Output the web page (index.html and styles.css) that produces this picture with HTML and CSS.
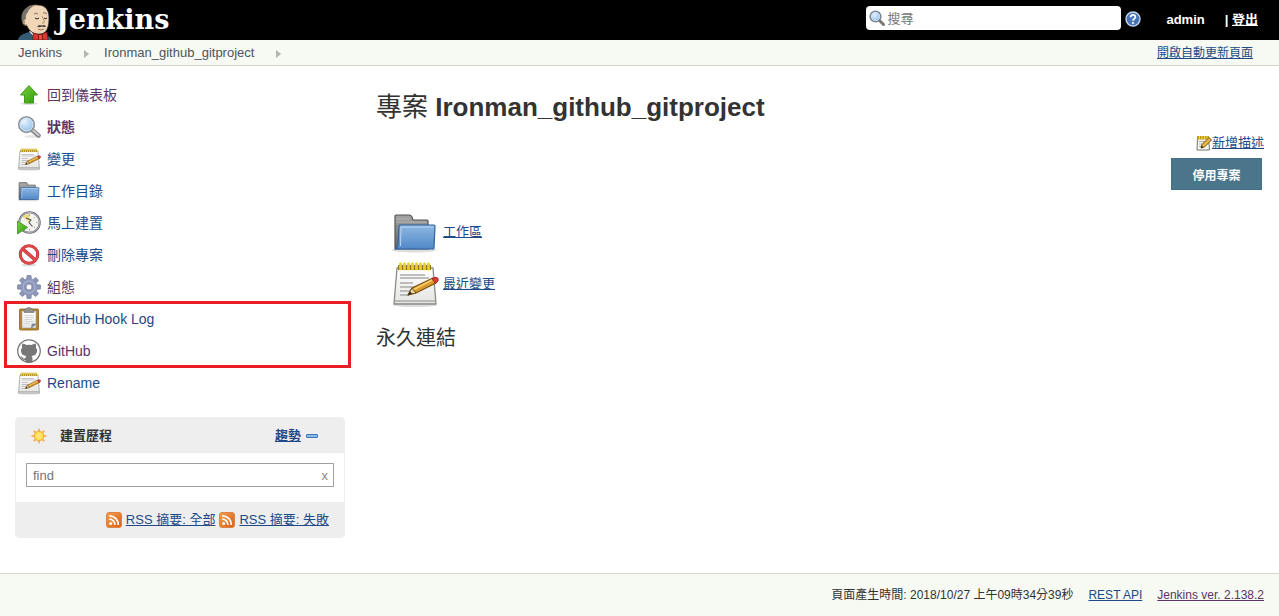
FILE: index.html
```html
<!DOCTYPE html>
<html lang="zh-TW">
<head>
<meta charset="utf-8">
<title>Ironman_github_gitproject [Jenkins]</title>
<link rel="stylesheet" href="styles.css">
</head>
<body>
<svg class="sprite" aria-hidden="true">
  <defs>
    <linearGradient id="g-blue" x1="0" y1="0" x2="0" y2="1"><stop offset="0" stop-color="#8fb8e3"/><stop offset="1" stop-color="#5188c8"/></linearGradient>
    <linearGradient id="g-green" x1="0" y1="0" x2="1" y2="1"><stop offset="0" stop-color="#7ed23c"/><stop offset="1" stop-color="#2f9a0c"/></linearGradient>
    <linearGradient id="g-paper" x1="0" y1="0" x2="0" y2="1"><stop offset="0" stop-color="#ffffff"/><stop offset="1" stop-color="#e4e4e2"/></linearGradient>
    <linearGradient id="g-gray" x1="0" y1="0" x2="0" y2="1"><stop offset="0" stop-color="#a2a2a2"/><stop offset="1" stop-color="#666666"/></linearGradient>
    <linearGradient id="g-orange" x1="0" y1="0" x2="1" y2="1"><stop offset="0" stop-color="#f2a04e"/><stop offset="1" stop-color="#d95f17"/></linearGradient>
    <radialGradient id="g-lens" cx=".4" cy=".35" r=".7"><stop offset="0" stop-color="#e0effd"/><stop offset="1" stop-color="#8dbbe8"/></radialGradient>
    <radialGradient id="g-sun"><stop offset="0" stop-color="#fff38a"/><stop offset="1" stop-color="#fbd23c"/></radialGradient>
  </defs>
  <symbol id="i-up" viewBox="0 0 48 48">
    <ellipse cx="24" cy="41" rx="17" ry="3" fill="#ddd"/>
    <path d="M24 5 41 24H33V40H15V24H7Z" fill="url(#g-green)" stroke="#3c9a17" stroke-width="2" stroke-linejoin="round"/>
  </symbol>
  <symbol id="i-search" viewBox="0 0 48 48">
    <ellipse cx="30" cy="43" rx="15" ry="3" fill="#e6e6e6"/>
    <path d="M30 30 43 41" stroke="#8b8b8b" stroke-width="9" stroke-linecap="round"/>
    <path d="M31 30 43 40" stroke="#c9c9c9" stroke-width="4" stroke-linecap="round"/>
    <circle cx="19" cy="19" r="15.500" fill="url(#g-lens)" stroke="#8c969f" stroke-width="3.500"/>
    <circle cx="19" cy="19" r="13" fill="none" stroke="#e6edf3" stroke-width="1.500"/>
    <path d="M10 19c0-7 5-9 9-9" fill="none" stroke="#fff" stroke-width="2"/>
  </symbol>
  <symbol id="i-search-small" viewBox="0 0 16 16">
    <path d="M10 10 14.500 14.500" stroke="#777" stroke-width="3" stroke-linecap="round"/>
    <circle cx="6.500" cy="6.500" r="5.300" fill="url(#g-lens)" stroke="#76828e" stroke-width="1.600"/>
    <circle cx="6.500" cy="6.500" r="4.200" fill="none" stroke="#dce9f5" stroke-width=".7"/>
  </symbol>
  <symbol id="i-notepad" viewBox="0 0 48 48">
    <ellipse cx="24" cy="45" rx="22" ry="2" fill="#ddd"/>
    <path d="M6 8H42L45 44H3Z" fill="url(#g-paper)" stroke="#8a8a86" stroke-width="1.3" stroke-linejoin="round"/>
    <path d="M4 41H44" stroke="#aaa" stroke-width="1.5"/>
    <path d="M9 15H34M9 18H38M9 23H22M9 27H33M9 31H22M9 35H18" stroke="#aaa" stroke-width="1.3"/>
    <path d="M7 5H40V10H7Z" fill="#8c7a18"/>
    <path d="M9.500 4V9M13.500 4V9M17.500 4V9M21.500 4V9M25.500 4V9M29.500 4V9M33.500 4V9M37.500 4V9" stroke="#e8cd31" stroke-width="2.800" stroke-linecap="round"/>
    <path d="M17 35 21 28 42 18 45 23 25 33Z" fill="#d99a2b" stroke="#7a5312" stroke-width="1.2" stroke-linejoin="round"/>
    <path d="M22 30 41 20" stroke="#f6cf6c" stroke-width="1.500"/>
    <path d="M17 35 21 28 25 33Z" fill="#edd5a4" stroke="#6b4a13"/>
    <path d="M17 35 19 31.500 21 33.500Z" fill="#222"/>
    <path d="M41 18.500 44 17.500Q48 17 47 21L44.500 23.500Z" fill="#dd3b36" stroke="#a82622"/>
  </symbol>
  <symbol id="i-folder" viewBox="0 0 48 48">
    <ellipse cx="23" cy="42" rx="22" ry="2.500" fill="#ddd"/>
    <path d="M4 41V8Q4 7 5 7H18Q20 7 21 9L22 12H36Q37 12 37 13V41Z" fill="url(#g-gray)" stroke="#555" stroke-width="1.200"/>
    <path d="M5 11H19M5 14H36" stroke="#b5b5b5"/>
    <path d="M9 17H43Q44 17 44 18L43 40Q43 41 42 41H5Q6 40 7 36L8 18Q8 17 9 17Z" fill="url(#g-blue)" stroke="#2f639f" stroke-width="1.200"/>
    <path d="M9.500 38 10 19H42.500" fill="none" stroke="#b9d6f2"/>
  </symbol>
  <symbol id="i-clock" viewBox="0 0 48 48">
    <circle cx="25" cy="23" r="20.500" fill="#f4f4ee" stroke="#6d6d78" stroke-width="4"/>
    <circle cx="25" cy="23" r="20" fill="none" stroke="#bcbcc6" stroke-width="2"/>
    <path d="M25 23 11 11Q17 5 25 6Z" fill="#edd97f"/>
    <path d="M25 7v3M25 36v3M38 23h3M36 12l-2 2M36 34l-2-2" stroke="#999" stroke-width="1.800"/>
    <path d="M18 14 28 18 24 23 31 31" fill="none" stroke="#555" stroke-width="2.200"/>
    <path d="M1 20 21 33 1 46Z" fill="url(#g-green)" stroke="#3b8b22" stroke-width="1.500"/>
  </symbol>
  <symbol id="i-stop" viewBox="0 0 48 48">
    <ellipse cx="24" cy="44" rx="15" ry="3" fill="#ddd"/>
    <circle cx="24" cy="23" r="17.500" fill="#fff" stroke="#b9272a" stroke-width="6"/>
    <path d="M11.500 12 36.500 34" stroke="#b9272a" stroke-width="7"/>
    <circle cx="24" cy="23" r="17.500" fill="none" stroke="#df4a4c" stroke-width="4"/>
    <path d="M11.500 12 36.500 34" stroke="#df4a4c" stroke-width="5"/>
  </symbol>
  <symbol id="i-gear" viewBox="0 0 48 48">
    <g fill="#8b96b8" stroke="#69749a" stroke-width="1.200">
      <path id="tooth" d="M19 10 20 1H28L29 10Z"/>
      <use href="#tooth" transform="rotate(45 24 24)"/><use href="#tooth" transform="rotate(90 24 24)"/><use href="#tooth" transform="rotate(135 24 24)"/><use href="#tooth" transform="rotate(180 24 24)"/><use href="#tooth" transform="rotate(225 24 24)"/><use href="#tooth" transform="rotate(270 24 24)"/><use href="#tooth" transform="rotate(315 24 24)"/>
    </g>
    <circle cx="24" cy="24" r="11.500" fill="none" stroke="#8b96b8" stroke-width="11"/>
    <circle cx="24" cy="24" r="12" fill="none" stroke="#a5aecb" stroke-width="3"/>
    <circle cx="24" cy="24" r="6" fill="#fff" stroke="#69749a" stroke-width="1.500"/>
  </symbol>
  <symbol id="i-clipboard" viewBox="0 0 48 48">
    <rect x="5" y="4" width="38" height="42" rx="2" fill="#b8852f" stroke="#8a5d14" stroke-width="1.500"/>
    <path d="M10 8H38V42H10Z" fill="url(#g-paper)" stroke="#999"/>
    <path d="M15 17H33M15 21H33M15 25H30M15 29H33M15 33H26" stroke="#ccc" stroke-width="1.500"/>
    <path d="M29 42 38 34 30 34Z" fill="#8294aa" stroke="#666"/>
    <path d="M14 11V6Q14 4 17 4H19Q19 1 24 1T29 4H31Q34 4 34 6V11Z" fill="#92928c" stroke="#5e5e59"/>
  </symbol>
  <symbol id="i-github" viewBox="0 0 48 48">
    <circle cx="24" cy="24" r="22.500" fill="#fff" stroke="#777" stroke-width="2.500"/>
    <path d="M11 9Q15 9 19 12Q24 11 29 12Q33 9 37 9Q39 13 37.500 17Q41 20 40 25Q39 33 29 34Q31 36 31 39V46Q24 48 17 46V42Q11 43 9 38Q7 36 6 35Q10 34 12 38Q14 40 17 38Q17 35 19 34Q9 33 8 25Q7 20 10.500 17Q9 13 11 9Z" fill="#777"/>
  </symbol>
  <symbol id="i-sun" viewBox="0 0 16 16">
    <path d="M8 .5V15.500M.5 8H15.500M2.700 2.700 13.300 13.300M13.300 2.700 2.700 13.300" stroke="#f2b767" stroke-width="2"/>
    <circle cx="8" cy="8" r="4.800" fill="url(#g-sun)" stroke="#f0ad48"/>
  </symbol>
  <symbol id="i-rss" viewBox="0 0 16 16">
    <rect x=".5" y=".5" width="15" height="15" rx="2.500" fill="url(#g-orange)" stroke="#e08343"/>
    <circle cx="4.700" cy="11.500" r="1.500" fill="#fff"/>
    <path d="M3.300 7.200A5.500 5.500 0 0 1 8.900 12.900M3.300 3.800A9 9 0 0 1 12.300 12.900" fill="none" stroke="#fff" stroke-width="1.800"/>
  </symbol>
  <symbol id="i-help" viewBox="0 0 16 16">
    <circle cx="8" cy="8" r="7" fill="#4775b5" stroke="#c3d3e8" stroke-width="1.400"/>
    <path d="M5.600 6.200Q5.800 3.900 8 3.900T10.400 6C10.400 7.800 8 7.700 8 9.700" fill="none" stroke="#fff" stroke-width="1.700"/>
    <circle cx="8" cy="12" r="1.100" fill="#fff"/>
  </symbol>
  <symbol id="i-edit" viewBox="0 0 16 16">
    <path d="M1.500 2.500H12.500L13.500 15H1Z" fill="#f8f8f4" stroke="#77736a"/>
    <path d="M3 6.500H10M3 9H8M3 11.500H7" stroke="#aaa"/>
    <path d="M1 1H13V4.500H1Z" fill="#c39b1a"/>
    <path d="M3.500 1V4M6 1V4M8.500 1V4M11 1V4" stroke="#f3d94c"/>
    <path d="M5 13 6 9.500 13 2.500 15.500 5 8.500 12Z" fill="#e9b73d" stroke="#77550f"/>
    <path d="M5 13 5.700 10.500 7.500 12.200Z" fill="#222"/>
  </symbol>
</svg>

<header class="header">
  <a class="logo" href="#">
    <svg class="logo-mark" viewBox="0 0 34 36" aria-hidden="true">
      <path d="M0 36Q1 31 8 29L14 27 27 31Q32 32 34 36Z" fill="#335c74"/>
      <path d="M11 27 16 33 25 36 27 30Z" fill="#fff"/>
      <path d="M5 11C6 3 13 0 20 1 28 1 31.500 7 31 15 31 24 28 30 22 30 16 31 11 27 9 22 4 22 3 17 6 15Z" fill="#f0d6b7" stroke="#231f20" stroke-width=".8"/>
      <path d="M4 18Q2 10 7 5 12 1 17 1.500 11 4 10 8 7 11 8 15 7 15 6 17Z" fill="#77736b"/>
      <path d="M7 18Q5 17 6 20 7 22 9 21" fill="none" stroke="#6d4c35" stroke-width=".8"/>
      <path d="M16 10Q18 8 20 10M25 9Q27 8 29 10" fill="none" stroke="#57463a" stroke-width=".7"/>
      <path d="M17 14Q19 16 21 14M26 14Q28 15.500 29 14" fill="none" stroke="#231f20"/>
      <path d="M24 12Q27 17 26 19L24 19" fill="none" stroke="#9d7559" stroke-width=".7"/>
      <path d="M19 22.500Q21 20 24 21.500 27 20 28 22.500 26 23.500 24 22.500 21 24 19 22.500Z" fill="#4b4542"/>
      <path d="M20 25Q23 27 26 25" fill="none" stroke="#8a5a45" stroke-width=".8"/>
      <path d="M15 29 22 31 29 28 30 36H15Z" fill="#d33833" stroke="#6d120f" stroke-width=".7"/>
      <path d="M20.500 30.500H24.500V36H20.500Z" fill="#ef4841" stroke="#6d120f" stroke-width=".8"/>
    </svg>
    <span class="logo-name">Jenkins</span>
  </a>
  <form class="search">
    <svg class="icon-16" aria-hidden="true"><use href="#i-search-small"/></svg>
    <input class="search-input" type="text" placeholder="搜尋" aria-label="搜尋">
  </form>
  <a class="help" href="#" aria-label="說明"><svg class="icon-16" aria-hidden="true"><use href="#i-help"/></svg></a>
  <div class="login"><a class="user" href="#">admin</a><span>| <a class="logout" href="#">登出</a></span></div>
</header>

<nav class="crumbs">
  <a class="crumb" href="#">Jenkins</a><span class="crumb-arrow"></span>
  <a class="crumb" href="#">Ironman_github_gitproject</a><span class="crumb-arrow"></span>
  <a class="refresh" href="#">開啟自動更新頁面</a>
</nav>

<div class="page">
  <aside class="side">
    <nav class="tasks">
      <a class="task visited" href="#"><svg class="icon-24" aria-hidden="true"><use href="#i-up"/></svg>回到儀表板</a>
      <a class="task visited current" href="#"><svg class="icon-24" aria-hidden="true"><use href="#i-search"/></svg>狀態</a>
      <a class="task" href="#"><svg class="icon-24" aria-hidden="true"><use href="#i-notepad"/></svg>變更</a>
      <a class="task" href="#"><svg class="icon-24" aria-hidden="true"><use href="#i-folder"/></svg>工作目錄</a>
      <a class="task" href="#"><svg class="icon-24" aria-hidden="true"><use href="#i-clock"/></svg>馬上建置</a>
      <a class="task" href="#"><svg class="icon-24" aria-hidden="true"><use href="#i-stop"/></svg>刪除專案</a>
      <a class="task visited" href="#"><svg class="icon-24" aria-hidden="true"><use href="#i-gear"/></svg>組態</a>
      <div class="marked">
        <a class="task" href="#"><svg class="icon-24" aria-hidden="true"><use href="#i-clipboard"/></svg>GitHub Hook Log</a>
        <a class="task visited" href="#"><svg class="icon-24" aria-hidden="true"><use href="#i-github"/></svg>GitHub</a>
      </div>
      <a class="task" href="#"><svg class="icon-24" aria-hidden="true"><use href="#i-notepad"/></svg>Rename</a>
    </nav>
    <section class="history">
      <div class="history-head">
        <svg class="icon-16" aria-hidden="true"><use href="#i-sun"/></svg>
        <h2 class="history-title">建置歷程</h2>
        <a class="trend" href="#">趨勢</a>
        <button class="collapse" type="button" aria-label="收合"></button>
      </div>
      <div class="history-body">
        <div class="find">
          <input class="find-input" type="text" placeholder="find" aria-label="find">
          <button class="find-clear" type="button">x</button>
        </div>
      </div>
      <div class="history-foot">
        <svg class="icon-16" aria-hidden="true"><use href="#i-rss"/></svg>
        <a href="#">RSS 摘要: 全部</a>
        <svg class="icon-16" aria-hidden="true"><use href="#i-rss"/></svg>
        <a href="#">RSS 摘要: 失敗</a>
      </div>
    </section>
  </aside>

  <main class="main">
    <h1 class="title"><span class="title-kind">專案</span> Ironman_github_gitproject</h1>
    <div class="actions">
      <a class="describe" href="#"><svg class="icon-16" aria-hidden="true"><use href="#i-edit"/></svg>新增描述</a>
      <button class="disable" type="button">停用專案</button>
    </div>
    <div class="shortcuts">
      <a class="shortcut" href="#"><svg class="icon-48" aria-hidden="true"><use href="#i-folder"/></svg><span>工作區</span></a>
      <a class="shortcut" href="#"><svg class="icon-48" aria-hidden="true"><use href="#i-notepad"/></svg><span>最近變更</span></a>
    </div>
    <h2 class="permalinks">永久連結</h2>
  </main>
</div>

<footer class="footer">
  <span>頁面產生時間: 2018/10/27 上午09時34分39秒</span>
  <a href="#">REST API</a>
  <a class="visited" href="#">Jenkins ver. 2.138.2</a>
</footer>
</body>
</html>
```

FILE: styles.css
```css
* { box-sizing: border-box; }
body {
  display: flex;
  flex-direction: column;
  min-height: 100vh;
  margin: 0;
  background: #fff;
  color: #333;
  font: 13px/20px "Liberation Sans", "Noto Sans CJK TC", sans-serif;
}
a { color: #204a87; }
a.visited { color: #5c3566; }
h1, h2 { margin: 0; }
button, input { font-family: inherit; }
svg { flex: none; display: block; }
.sprite { position: absolute; width: 0; height: 0; }
.icon-16 { width: 16px; height: 16px; }
.icon-24 { width: 24px; height: 24px; }
.icon-48 { width: 48px; height: 48px; }

.header {
  display: flex;
  align-items: flex-start;
  height: 40px;
  padding-right: 21px;
  background: #000;
  color: #fff;
}
.logo {
  display: flex;
  gap: 4px;
  margin-right: auto;
  padding: 4px 0 0 18px;
  color: #fff;
  text-decoration: none;
}
.logo-mark { width: 34px; height: 36px; }
.logo-name { font: bold 27px/32px "DejaVu Serif", serif; }
.search {
  display: flex;
  align-items: center;
  gap: 2px;
  width: 255px;
  height: 24px;
  margin-top: 6px;
  padding-left: 3px;
  border-radius: 4px;
  background: #fff;
}
.search-input {
  flex: 1;
  min-width: 0;
  height: 22px;
  padding: 0;
  border: 0;
  background: none;
  font-size: 13px;
  outline: 0;
}
.search-input::placeholder, .find-input::placeholder { color: #757575; }
.help { margin: 11px 25px 0 4px; }
.login { display: flex; gap: 20px; margin-top: 10px; font-weight: bold; }
.login a { color: #fff; }
.login .user { text-decoration: none; }

.crumbs {
  display: flex;
  align-items: center;
  height: 26px;
  padding: 0 26px 0 18px;
  border-bottom: 1px solid #d3d7cf;
  background: #f6faf2;
}
.crumb { color: #4d545d; text-decoration: none; }
.crumb-arrow {
  margin: 2px 15px 0 22px;
  border: 4px solid transparent;
  border-width: 4px 0 4px 5px;
  border-left-color: #b3b3b3;
}
.refresh { margin-left: auto; font-size: 12px; }

.page { display: flex; flex: 1; }
.side { flex: none; width: 345px; padding: 13px 0 35px 15px; }
.task {
  display: flex;
  align-items: center;
  gap: 6px;
  height: 32px;
  padding-left: 2px;
  font-size: 14px;
  text-decoration: none;
}
.current { font-weight: bold; }
.marked { position: relative; }
.marked::after {
  content: "";
  position: absolute;
  inset: -2px -6px -1px -11px;
  border: 3px solid #ea1c24;
  pointer-events: none;
}
.history {
  margin-top: 18px;
  border: 1px solid #eee;
  border-radius: 4px;
  overflow: hidden;
}
.history-head {
  display: flex;
  align-items: center;
  height: 35px;
  padding: 0 26px 0 15px;
  background: #eee;
  font-weight: bold;
}
.history-title { margin: 0 auto 0 13px; font-size: 13px; }
.collapse {
  width: 12px;
  height: 4px;
  margin-left: 5px;
  padding: 0;
  border: 1px solid #3c77b4;
  border-radius: 1px;
  background: #8abdea;
}
.history-body { padding: 10px 10px 15px; }
.find {
  display: flex;
  align-items: center;
  height: 24px;
  border: 1px solid #a0a0a0;
}
.find-input {
  flex: 1;
  min-width: 0;
  padding: 0 6px;
  border: 0;
  background: none;
  font-size: 13px;
  outline: 0;
}
.find-clear {
  padding: 0 5px;
  border: 0;
  background: none;
  color: #8a8a8a;
  font-size: 13px;
}
.history-foot {
  display: flex;
  align-items: center;
  justify-content: flex-end;
  gap: 4px;
  height: 35px;
  padding-right: 15px;
  background: #eee;
}

.main { flex: 1; min-width: 0; padding: 26px 15px 15px 31px; }
.title { font-size: 26px; line-height: 30px; }
.title-kind { font-weight: normal; }
.actions {
  display: flex;
  flex-direction: column;
  align-items: flex-end;
  gap: 5px;
  padding-top: 11px;
}
.describe { display: flex; align-items: center; }
.disable {
  width: 91px;
  height: 32px;
  margin-right: 2px;
  padding: 0;
  border: 1px solid #43708a;
  background: #4b758b;
  color: #fff;
  font-size: 12px;
  font-weight: bold;
}
.shortcuts { display: flex; flex-direction: column; gap: 4px; padding: 18px 0 0 15px; }
.shortcut { display: flex; align-items: center; gap: 4px; width: fit-content; }
.permalinks { margin-top: 15px; font-size: 20px; font-weight: normal; line-height: 30px; }

.footer {
  display: flex;
  justify-content: flex-end;
  align-items: center;
  gap: 15px;
  height: 43px;
  padding-right: 15px;
  border-top: 1px solid #d3d7cf;
  background: #f6faf2;
  font-size: 12px;
}
```
